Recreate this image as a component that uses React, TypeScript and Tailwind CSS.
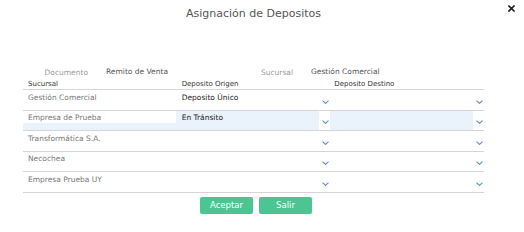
import React from 'react';

const font = { fontFamily: '"DejaVu Sans", Verdana, sans-serif' };

interface Row {
    sucursal: string;
    origen: string;
    selected?: boolean;
}

const rows: Row[] = [
    { sucursal: 'Gestión Comercial', origen: 'Deposito Único' },
    { sucursal: 'Empresa de Prueba', origen: 'En Tránsito', selected: true },
    { sucursal: 'Transformática S.A.', origen: '' },
    { sucursal: 'Necochea', origen: '' },
    { sucursal: 'Empresa Prueba UY', origen: '' },
];

const Chevron = () => (
    <svg width="7" height="4" viewBox="0 0 7 4" className="block">
        <polyline points="0.5,0.6 3.5,3.4 6.5,0.6" fill="none" stroke="#5b8ed8" strokeWidth="1.1" />
    </svg>
);

const SelectCell: React.FC<{ value: string; selected?: boolean }> = ({ value, selected }) => (
    <div className="flex h-full">
        <div className="flex-1 pl-[5px] pt-[2.5px] leading-[9px] text-[#222]">{value}</div>
        <div className={`w-[11px] h-full pt-[9.5px] pl-[2.5px] ${selected ? 'bg-white' : ''}`}>
            <Chevron />
        </div>
    </div>
);

export default function App() {
    return (
        <div className="relative w-[524px] h-[232px] bg-white overflow-hidden" style={font}>
            {/* Close */}
            <div className="absolute top-[5px] right-[9px]">
                <svg width="7" height="7" viewBox="0 0 7 7" className="block">
                    <path d="M1 1 L6 6 M6 1 L1 6" stroke="#1f1f1f" strokeWidth="1.6" strokeLinecap="square" />
                </svg>
            </div>

            <div className="ml-[23px] w-[461px] flex flex-col">
                <div className="h-[26px] pt-[2px] flex items-center justify-center text-[11px] text-[#555]">
                    Asignación de Depositos
                </div>

                {/* Document info */}
                <div className="mt-[40.5px] h-[13.5px] flex items-start text-[7.5px] leading-[10px]">
                    <div className="w-[65px] text-right text-[#9a9a9a] mt-[1.5px]">Documento</div>
                    <div className="ml-[18px] w-[137px] text-[#555]">Remito de Venta</div>
                    <div className="w-[50px] text-right text-[#9a9a9a] mt-[1.5px]">Sucursal</div>
                    <div className="ml-[18px] text-[#555]">Gestión Comercial</div>
                </div>

                {/* Table */}
                <div className="grid grid-cols-3 h-[10px] border-b border-[#d5d5d5] text-[7px] leading-[9px] text-[#333]">
                    <div className="pl-[5px]">Sucursal</div>
                    <div className="pl-[5px]">Deposito Origen</div>
                    <div className="pl-[4px]">Deposito Destino</div>
                </div>
                {rows.map((r) => (
                    <div
                        key={r.sucursal}
                        className={`grid grid-cols-3 h-[20.6px] border-b border-[#d5d5d5] text-[7.5px] ${r.selected ? 'bg-[#eaf2fb]' : ''}`}
                    >
                        <div className="pr-[1px]">
                            <div className={`h-[12.5px] pl-[5px] pt-[2.5px] leading-[9px] text-[#777] ${r.selected ? 'bg-white' : ''}`}>
                                {r.sucursal}
                            </div>
                        </div>
                        <SelectCell value={r.origen} selected={r.selected} />
                        <SelectCell value="" selected={r.selected} />
                    </div>
                ))}

                {/* Actions */}
                <div className="mt-[4px] pl-[5px] flex justify-center gap-[6px]">
                    <button className="w-[53px] h-[17px] rounded-[2px] bg-[#4cc592] text-white text-[8.5px]" style={font}>
                        Aceptar
                    </button>
                    <button className="w-[53px] h-[17px] rounded-[2px] bg-[#4cc592] text-white text-[8.5px]" style={font}>
                        Salir
                    </button>
                </div>
            </div>
        </div>
    );
}
